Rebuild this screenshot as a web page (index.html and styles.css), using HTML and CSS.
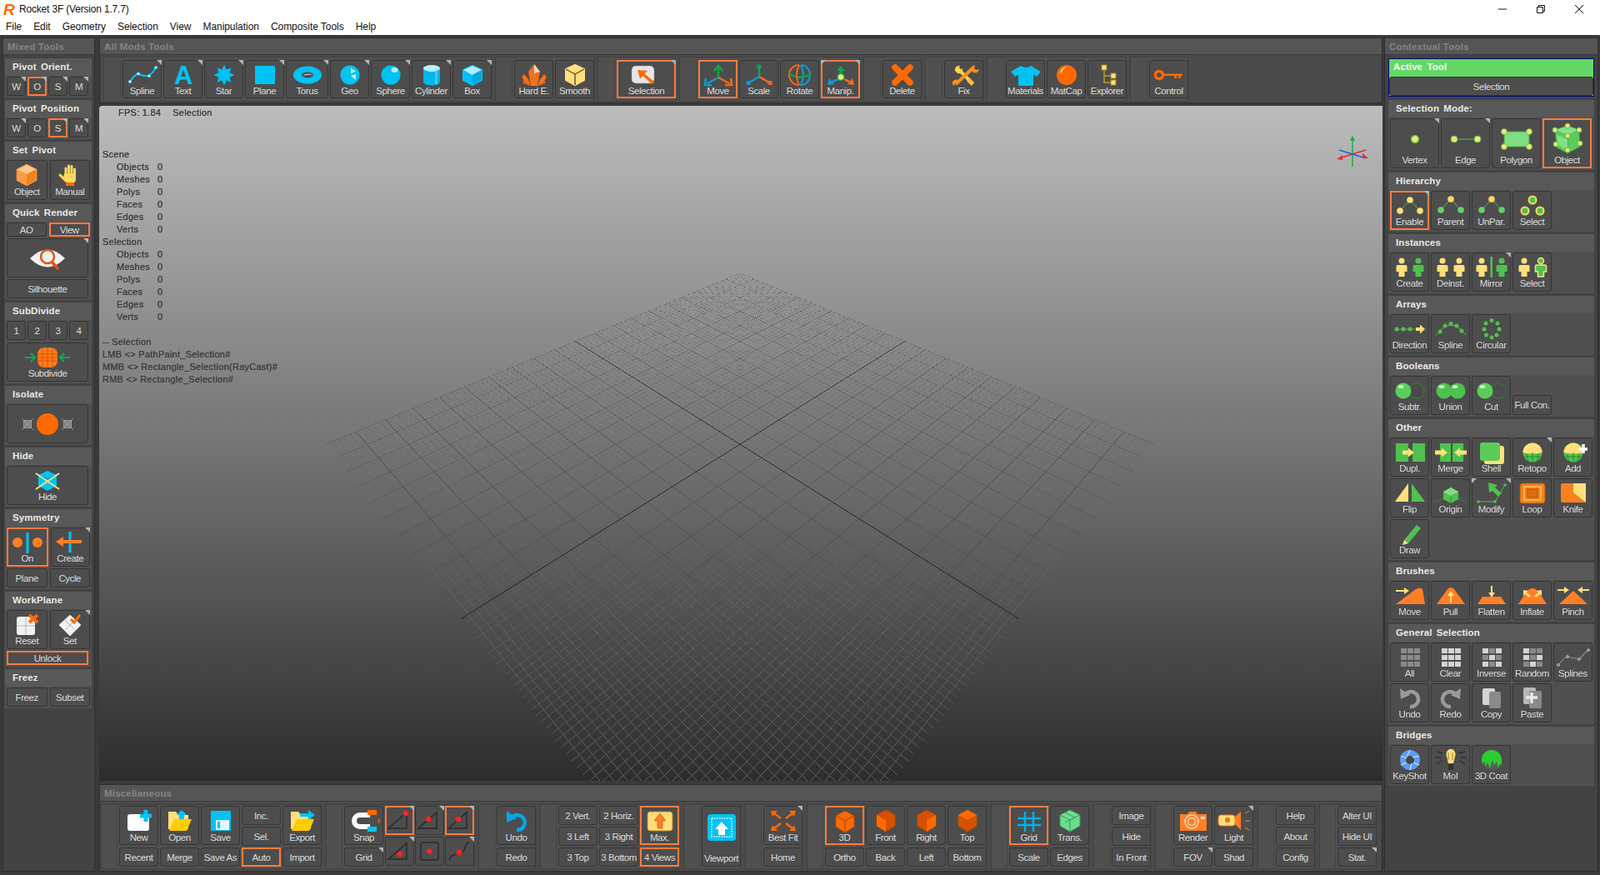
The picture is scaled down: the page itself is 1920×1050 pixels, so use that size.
FILE: index.html
```html
<!DOCTYPE html>
<html lang="en">
<head>
<meta charset="utf-8">
<title>Rocket 3F (Version 1.7.7)</title>
<link rel="stylesheet" href="styles.css">
</head>
<body>
<svg class="defs" aria-hidden="true">
<defs>
<!-- top toolbar -->
<symbol id="spline" viewBox="0 0 40 28"><path d="M5 22Q10 14 15 12.500Q22 16 28 15Q33 11 36 5" fill="none" stroke="#00c3f5" stroke-width="2"/><g fill="#fff" stroke="#00c3f5" stroke-width=".6"><circle cx="5" cy="22" r="1.800"/><circle cx="15" cy="12.500" r="1.800"/><circle cx="28" cy="15" r="1.800"/><circle cx="36" cy="5" r="1.800"/></g></symbol>
<symbol id="text" viewBox="0 0 40 28"><text class="ta" x="20" y="25">A</text></symbol>
<symbol id="star" viewBox="0 0 40 28"><polygon fill="#00c3f5" points="20,1.500 22.700,7.500 28.500,5.500 26.500,11.300 32.500,14 26.500,16.700 28.500,22.500 22.700,20.500 20,26.500 17.300,20.500 11.500,22.500 13.500,16.700 7.500,14 13.500,11.300 11.500,5.500 17.300,7.500"/></symbol>
<symbol id="plane" viewBox="0 0 40 28"><rect x="8" y="3" width="24" height="22" fill="#00c3f5"/></symbol>
<symbol id="torus" viewBox="0 0 40 28"><ellipse cx="20" cy="14" rx="17" ry="10.500" fill="#00c3f5"/><ellipse cx="20" cy="14" rx="7" ry="3.500" fill="#4d4d4d"/><path d="M14 15Q20 11 26 14Q20 12.500 14 15Z" fill="#fff"/></symbol>
<symbol id="geo" viewBox="0 0 40 28"><circle cx="20" cy="14" r="11.500" fill="#00c3f5"/><path d="M21 5.500l6 4-6 3zM21 15l6-2v7z" fill="#cdf3ff"/></symbol>
<symbol id="sphere" viewBox="0 0 40 28"><circle cx="20" cy="14" r="11.500" fill="#00c3f5"/><ellipse cx="24.500" cy="8" rx="4" ry="3" fill="#bdf0ff"/></symbol>
<symbol id="cyl" viewBox="0 0 40 28"><path d="M10 6V22C10 28 30 28 30 22V6Z" fill="#00b5ea"/><ellipse cx="20" cy="6" rx="10" ry="4" fill="#bdf0ff"/><rect x="24" y="6" width="3" height="19" fill="#7fe2ff" opacity=".5"/></symbol>
<symbol id="box" viewBox="0 0 40 28"><path d="M20 3L31 8V20L20 26 9 20V8Z" fill="#00c3f5" stroke="#00c3f5" stroke-linejoin="round" stroke-width="2"/><path d="M9 8L20 3 31 8 20 14Z" fill="#aeeeff"/><path d="M20 14V26L31 20V8Z" fill="#00a8dc"/></symbol>
<symbol id="hard" viewBox="0 0 40 28"><path d="M9 16l7 11-10-3zM31 16l-7 11 10-3z" fill="#e06020"/><path d="M20 1l7 9-3 17H16l-3-17z" fill="#f07020"/><path d="M20 1l7 9-7 2z" fill="#ffd9c0"/><path d="M8 13l5 6 3 8-7-3-4-8zM32 13l-5 6-3 8 7-3 4-8z" fill="#f5701e" stroke="#b84a10" stroke-width=".6"/></symbol>
<symbol id="smooth" viewBox="0 0 40 28"><path d="M20 2L31 7V20L20 26 9 20V7Z" fill="#ffdf7a" stroke="#ffdf7a" stroke-width="2" stroke-linejoin="round"/><path d="M9 7L20 13 31 7M20 13V26" fill="none" stroke="#5a5030" stroke-width="1.400"/></symbol>
<symbol id="sel" viewBox="0 0 40 28"><rect x="2" y="2" width="27" height="21" rx="5" fill="#e6e6e6" stroke="#8a8a8a" stroke-dasharray="2 2"/><path d="M9 7l12 1-3.500 3.500 12 10-2.500 3-11.500-10.500-3.500 3.500z" fill="#ff6a00"/></symbol>
<symbol id="move" viewBox="0 0 40 28"><path d="M20 16V4" stroke="#0ea64c" stroke-width="2.500" fill="none"/><path d="M15 8l5-6 5 6" stroke="#0ea64c" stroke-width="2.500" fill="none"/><path d="M20 16L7 23" stroke="#0e9bd0" stroke-width="2.500"/><path d="M5 17l-1 8 8 0" stroke="#0e9bd0" stroke-width="2.500" fill="none"/><path d="M20 16L33 23" stroke="#f26a1b" stroke-width="2.500"/><path d="M35 17l1 8-8 0" stroke="#f26a1b" stroke-width="2.500" fill="none"/></symbol>
<symbol id="scale" viewBox="0 0 40 28"><path d="M20 16V5" stroke="#0ea64c" stroke-width="2.500"/><circle cx="20" cy="4" r="2.800" fill="#0ea64c"/><path d="M20 16L8 23" stroke="#0e9bd0" stroke-width="2.500"/><circle cx="7" cy="23.500" r="2.800" fill="#0e9bd0"/><path d="M20 16L32 23" stroke="#f26a1b" stroke-width="2.500"/><circle cx="33" cy="23.500" r="2.800" fill="#f26a1b"/></symbol>
<symbol id="rotate" viewBox="0 0 40 28"><path d="M19 2A12 12 0 0 0 19 26" stroke="#f26a1b" stroke-width="2" fill="none"/><path d="M21 2A11 12 0 0 1 21 26Q27 14 21 2" stroke="#0e9bd0" stroke-width="2" fill="none"/><path d="M7 13Q20 20 33 13" stroke="#0ea64c" stroke-width="2.500" fill="none"/><path d="M19 2Q13 14 19 26" stroke="#f26a1b" stroke-width="2" fill="none"/></symbol>
<symbol id="manip" viewBox="0 0 40 28"><path d="M20 14V4" stroke="#0ea64c" stroke-width="3"/><path d="M15 8l5-6 5 6z" fill="#0ea64c"/><path d="M17 18L8 22" stroke="#0e9bd0" stroke-width="2.500"/><path d="M6 17l-2 8 8-1z" fill="#0e9bd0"/><path d="M24 18L32 22" stroke="#f26a1b" stroke-width="2.500"/><path d="M34 17l2 8-8-1z" fill="#f26a1b"/><circle cx="20" cy="15.500" r="4" fill="#e7f27a" stroke="#0ea64c" stroke-width="1.500"/></symbol>
<symbol id="del" viewBox="0 0 40 28"><path d="M11 5L29 23M29 5L11 23" stroke="#ff6a00" stroke-width="7.500" stroke-linecap="round"/></symbol>
<symbol id="fix" viewBox="0 0 40 28"><path d="M12 6L30 24" stroke="#ffd24a" stroke-width="4"/><path d="M9 9a5 5 0 0 1 6-6l-2 3 2 2 3-2a5 5 0 0 1-6 6z" fill="#ffd24a"/><rect x="24" y="20" width="8" height="5" transform="rotate(45 28 22)" fill="#f8bf3a"/><path d="M31 5L10 25" stroke="#f7921e" stroke-width="4"/><path d="M29 9a5 5 0 0 1 4-7l-1 4 2 2 4-1a5 5 0 0 1-7 4z" fill="#f7921e"/><path d="M6 24a4 4 0 0 1 7-3l-6 6z" fill="#f7921e"/></symbol>
<symbol id="shirt" viewBox="0 0 40 28"><path d="M14 3Q20 7 26 3L38 10 33 16 29 13V27H11V13L7 16 2 10Z" fill="#00c3f5"/></symbol>
<symbol id="ball" viewBox="0 0 40 28"><circle cx="20" cy="14" r="12" fill="#ff6a00"/><path d="M12 11Q14 5 20 4Q15 7 13.500 11.500Z" fill="#ffd9bc"/></symbol>
<symbol id="tree" viewBox="0 0 40 28"><path d="M16 8V23H24M16 15H24" fill="none" stroke="#b59b30" stroke-width="1.500"/><g fill="#ffdf7a" stroke="#a08a28"><rect x="13" y="2" width="6" height="6"/><rect x="24" y="12" width="6" height="6"/><rect x="24" y="20" width="6" height="6"/></g></symbol>
<symbol id="key" viewBox="0 0 40 28"><circle cx="8" cy="14" r="4.500" fill="none" stroke="#ff6a00" stroke-width="3.500"/><path d="M13 12.500H36V15H34V18H31V15H29V18H26V15H13Z" fill="#ff6a00"/></symbol>
<!-- left column -->
<symbol id="ocube" viewBox="0 0 40 28"><path d="M20 2L31 7.500V20L20 26 9 20V7.500Z" fill="#ff9b3f" stroke="#ff9b3f" stroke-width="2.500" stroke-linejoin="round"/><path d="M9 7.500L20 2 31 7.500 20 13Z" fill="#ffc98f"/><path d="M20 13V26L31 20V7.500Z" fill="#f08222"/></symbol>
<symbol id="hand" viewBox="0 0 40 28"><path d="M15 21L8 14M15 13V6M18.500 11V3M22 11V3.500M25.500 13V7" stroke="#ffd85c" stroke-width="3" stroke-linecap="round" fill="none"/><path d="M13 12H27V18Q27 22 25 23H16L12 18Z" fill="#ffd85c"/><rect x="15" y="23" width="10" height="4" fill="#ff6a00"/></symbol>
<symbol id="eye" viewBox="0 0 40 28"><path d="M-1 14Q20-7 41 14Q20 35-1 14Z" fill="#f2f2f2"/><circle cx="20" cy="12" r="8" fill="none" stroke="#e4530c" stroke-width="2.500"/><path d="M25 18L33 27" stroke="#e4530c" stroke-width="3.500"/></symbol>
<symbol id="subdiv" viewBox="0 0 58 28"><rect x="17" y="2" width="24" height="24" rx="8" fill="#ff7a1a"/><path d="M17 10H41M17 14H41M17 18H41M23 2V26M29 2V26M35 2V26" stroke="#d24f00" stroke-width=".8"/><path d="M2 14H13M9 9l5 5-5 5M56 14H45M49 9l-5 5 5 5" fill="none" stroke="#12a84e" stroke-width="2.200"/></symbol>
<symbol id="iso" viewBox="0 0 64 28"><g fill="#808080" stroke="#aaa" stroke-width=".8"><path d="M3.500 9.500H12.500V18.500H3.500ZM1 7L15 21M15 7L1 21"/><path d="M51.500 9.500H60.500V18.500H51.500ZM49 7L63 21M63 7L49 21"/></g><circle cx="32" cy="14" r="13" fill="#ff6a00"/></symbol>
<symbol id="hide" viewBox="0 0 40 28"><path d="M20 2L31 7V20L20 26 9 20V7Z" fill="#00c3f5"/><path d="M9 7L20 12 31 7" stroke="#0086b5" fill="none"/><path d="M6 5L34 24M34 5L6 24" stroke="#ffe07a" stroke-width="2"/></symbol>
<symbol id="symon" viewBox="0 0 40 28"><circle cx="8" cy="13" r="6" fill="#ff7f27"/><circle cx="32" cy="13" r="6" fill="#ff7f27"/><rect x="18.500" y="1" width="3" height="25" fill="#00c3f5"/></symbol>
<symbol id="symcr" viewBox="0 0 40 28"><rect x="18.500" y="1" width="3" height="25" fill="#00c3f5"/><path d="M3 13l9-6v4H34v4H12v4z" fill="#ff7f27"/></symbol>
<symbol id="reset" viewBox="0 0 40 28"><rect x="8" y="4" width="22" height="22" rx="3" fill="#f2f2f2"/><path d="M8 15H30M19 4V26" stroke="#a8a8a8" stroke-width=".8"/><path d="M23 2L33 11M33 2L23 11" stroke="#ff6a00" stroke-width="4"/></symbol>
<symbol id="setp" viewBox="0 0 40 28"><path d="M20 3L32 14 20 26 8 14Z" fill="#f2f2f2" stroke="#f2f2f2" stroke-width="2" stroke-linejoin="round"/><path d="M14 8L26 20M26 8L14 20" stroke="#a8a8a8" stroke-width=".8"/><path d="M21 7L25 11 32 2" stroke="#ff6a00" stroke-width="3" fill="none"/></symbol>
<!-- right column -->
<symbol id="vertex" viewBox="0 0 40 28"><circle cx="20" cy="14" r="4.500" fill="#ffe07a" stroke="#4fc14f" stroke-width="1.500"/></symbol>
<symbol id="edge" viewBox="0 0 40 28"><path d="M6 14H34" stroke="#4fc14f"/><circle cx="6" cy="14" r="4" fill="#ffe07a" stroke="#4fc14f"/><circle cx="34" cy="14" r="4" fill="#ffe07a" stroke="#4fc14f"/></symbol>
<symbol id="polyg" viewBox="0 0 40 28"><rect x="5" y="5" width="30" height="18" rx="2" fill="#84dc84" stroke="#3fae3f"/><g fill="#ffe07a" stroke="#4fc14f"><circle cx="5" cy="5" r="3.500"/><circle cx="35" cy="5" r="3.500"/><circle cx="5" cy="23" r="3.500"/><circle cx="35" cy="23" r="3.500"/></g></symbol>
<symbol id="objc" viewBox="0 0 40 28"><path d="M20 -3L34 2 35 22 20 30 7 23 5 2Z" fill="#5bcc5b" stroke="#2f9f2f"/><path d="M5 2L20 8 34 2M20 8V30" fill="none" stroke="#2f9f2f"/><path d="M5 2L20 -3 34 2 20 8Z" fill="#87e087"/><path d="M7 8L20 13V26L9 20Z" fill="#87e087"/><g fill="#ffe07a" stroke="#4fc14f"><circle cx="20" cy="-3" r="3"/><circle cx="5" cy="2" r="3"/><circle cx="34" cy="2" r="3"/><circle cx="20" cy="9" r="3"/><circle cx="6" cy="19" r="3"/><circle cx="35" cy="18" r="3"/><circle cx="20" cy="26" r="3"/></g></symbol>
<symbol id="hier" viewBox="0 0 40 28"><path d="M20 6L8 19M20 6L32 19" stroke="#4fc14f"/><circle cx="20" cy="6" r="3.800" fill="#ffe07a"/><circle cx="8" cy="19" r="3.800" fill="#ffe07a"/><circle cx="32" cy="19" r="3.800" fill="#ffe07a"/></symbol>
<symbol id="hparent" viewBox="0 0 40 28"><path d="M20 6L8 19M20 6L32 19" stroke="#4fc14f"/><circle cx="20" cy="6" r="3.800" fill="#ffd85c"/><circle cx="8" cy="19" r="3.800" fill="#67d067"/><circle cx="32" cy="19" r="3.800" fill="#67d067"/></symbol>
<symbol id="hsel" viewBox="0 0 40 28"><circle cx="20" cy="7" r="4.500" fill="#4fc14f" stroke="#ffd85c" stroke-width="2"/><circle cx="11" cy="20" r="4.500" fill="#4fc14f" stroke="#ffd85c" stroke-width="2"/><circle cx="29" cy="20" r="4.500" fill="#4fc14f" stroke="#ffd85c" stroke-width="2"/></symbol>
<symbol id="person" viewBox="-7 -12 14 24"><circle cy="-8" r="3.500"/><path d="M-5-3H5Q6.500-3 6.500-1V5H3.500V11H-3.500V5H-6.500V-1Q-6.500-3-5-3Z"/></symbol>
<symbol id="ins1" viewBox="0 0 40 28"><use href="#person" x="3" y="2" width="14" height="24" fill="#ffe07a"/><use href="#person" x="23" y="2" width="14" height="24" fill="#4fc14f"/></symbol>
<symbol id="ins2" viewBox="0 0 40 28"><use href="#person" x="3" y="2" width="14" height="24" fill="#ffe07a"/><use href="#person" x="23" y="2" width="14" height="24" fill="#ffe07a"/></symbol>
<symbol id="ins3" viewBox="0 0 40 28"><use href="#person" x="1" y="2" width="14" height="24" fill="#ffe07a"/><rect x="18.500" y="1" width="2.500" height="25" fill="#4fc14f"/><use href="#person" x="25" y="2" width="14" height="24" fill="#4fc14f"/></symbol>
<symbol id="ins4" viewBox="0 0 40 28"><use href="#person" x="3" y="2" width="14" height="24" fill="#ffe07a"/><use href="#person" x="23" y="2" width="14" height="24" fill="#4fc14f" stroke="#ffe07a" stroke-width="1.500"/></symbol>
<symbol id="adir" viewBox="0 0 40 28"><g fill="#4fc14f"><circle cx="4" cy="14" r="2.500"/><circle cx="12" cy="14" r="2.500"/><circle cx="20" cy="14" r="2.500"/></g><path d="M2 14H26" stroke="#4fc14f"/><path d="M27 12H32V8.500L38 14 32 19.500V16H27Z" fill="#ffe07a"/></symbol>
<symbol id="aspl" viewBox="0 0 40 28"><path d="M2 22Q19-3 38 21" fill="none" stroke="#4fc14f"/><g fill="#4fc14f"><circle cx="7" cy="17" r="2.500"/><circle cx="13" cy="10" r="2.500"/><circle cx="20" cy="7.500" r="2.500"/><circle cx="27" cy="10" r="2.500"/><circle cx="33" cy="16" r="2.500"/></g></symbol>
<symbol id="acir" viewBox="0 0 40 28"><g fill="#4fc14f"><circle cx="20" cy="3.500" r="2.500"/><circle cx="27" cy="7" r="2.500"/><circle cx="29" cy="14" r="2.500"/><circle cx="26" cy="21" r="2.500"/><circle cx="20" cy="24" r="2.500"/><circle cx="13.500" cy="21" r="2.500"/><circle cx="11" cy="14" r="2.500"/><circle cx="13" cy="7" r="2.500"/></g></symbol>
<symbol id="bsub" viewBox="0 0 40 28"><circle cx="28" cy="14" r="9" fill="#4a4a4a" stroke="#2b8c2b"/><circle cx="12" cy="14" r="9.500" fill="#5bcc5b"/><ellipse cx="9" cy="9" rx="3.500" ry="2" fill="#c9f2c9"/></symbol>
<symbol id="buni" viewBox="0 0 40 28"><circle cx="12" cy="14" r="9.500" fill="#4fc14f"/><circle cx="28" cy="14" r="9.500" fill="#4fc14f"/><ellipse cx="9" cy="9" rx="3.500" ry="2" fill="#c9f2c9"/><ellipse cx="25" cy="9" rx="3.500" ry="2" fill="#c9f2c9"/></symbol>
<symbol id="bcut" viewBox="0 0 40 28"><circle cx="28" cy="14" r="9" fill="none" stroke="#2b8c2b" stroke-width=".8"/><circle cx="12" cy="14" r="9.500" fill="#5bcc5b"/><ellipse cx="9" cy="9" rx="3.500" ry="2" fill="#c9f2c9"/></symbol>
<symbol id="odup" viewBox="0 0 40 28"><path d="M3 3H18V10L22 14 18 18V25H3Z" fill="#4fc14f"/><rect x="23" y="3" width="15" height="22" fill="#4fc14f"/><path d="M11 11.500H18V8.500L25 14 18 19.500V16.500H11Z" fill="#ffe07a"/></symbol>
<symbol id="omer" viewBox="0 0 40 28"><rect x="7" y="3" width="13" height="22" fill="#4fc14f"/><rect x="22" y="3" width="13" height="22" fill="#4fc14f"/><path d="M1 11.500H9V8.500L16 14 9 19.500V16.500H1ZM39 11.500H31V8.500L24 14 31 19.500V16.500H39Z" fill="#ffe07a"/></symbol>
<symbol id="oshe" viewBox="0 0 40 28"><rect x="11" y="6" width="24" height="22" rx="3" fill="#ffe07a"/><rect x="6" y="2" width="24" height="22" rx="3" fill="#5bcc5b"/></symbol>
<symbol id="oret" viewBox="0 0 40 28"><circle cx="20" cy="14" r="11.500" fill="#4fc14f"/><path d="M8.500 14A11.500 11.500 0 0 1 31.500 14Q20 17 8.500 14Z" fill="#ffe07a"/><path d="M9 19H31M20 14V26M13 16Q13 23 16 25M27 16Q27 23 24 25" stroke="#2b8c2b" fill="none"/></symbol>
<symbol id="oadd" viewBox="0 0 40 28"><use href="#oret"/><path d="M27 10H37M32 4V15" stroke="#fff" stroke-width="3.500"/></symbol>
<symbol id="oflp" viewBox="0 0 40 28"><path d="M18 2V24H2Z" fill="#ffe07a"/><path d="M22 2V24H38Z" fill="#4fc14f"/></symbol>
<symbol id="oori" viewBox="0 0 40 28"><path d="M20 -2V7M11 20L1 25M29 20L39 25" stroke="#2f8f2f" stroke-width=".8"/><path d="M20 7L29 12V21L20 26 11 21V12Z" fill="#4fc14f"/><path d="M11 12L20 7 29 12 20 17Z" fill="#84dc84"/><path d="M20 17V26" stroke="#2f8f2f"/></symbol>
<symbol id="omod" viewBox="0 0 40 28"><path d="M4 24H24L36 4" fill="none" stroke="#4fc14f"/><g fill="#4fc14f"><circle cx="4" cy="24" r="1.800"/><circle cx="24" cy="24" r="1.800"/><circle cx="36" cy="4" r="1.800"/></g><path d="M16 1L27 4 24 7 32 14 28 18 21 11 17 13Z" fill="#4fc14f"/></symbol>
<symbol id="oloo" viewBox="0 0 40 28"><rect x="5" y="2" width="30" height="24" rx="3" fill="#f5821f" stroke="#a85a10"/><rect x="10" y="6" width="20" height="16" fill="#f5821f" stroke="#ffe07a"/><rect x="14" y="9" width="12" height="10" fill="#e06a10" stroke="#a85a10"/></symbol>
<symbol id="okni" viewBox="0 0 40 28"><rect x="5" y="2" width="30" height="23" rx="2" fill="#f5821f"/><path d="M20 2H35V25L20 13Z" fill="#ffe07a"/></symbol>
<symbol id="odra" viewBox="0 0 40 28"><path d="M13 21L28 3 33 7 18 25Z" fill="#4fc14f"/><path d="M13 21L11 27 18 25Z" fill="#ffe07a"/></symbol>
<symbol id="bmov" viewBox="0 0 40 28"><path d="M3 24L27 6Q32 3 35 6L38 24Z" fill="#ff7f27"/><path d="M3 7H13V4L19 8 13 12V9H3Z" fill="#ffe07a"/></symbol>
<symbol id="bpul" viewBox="0 0 40 28"><path d="M3 24L16 6Q20 2 24 6L37 24Z" fill="#ff7f27"/><path d="M20 8L24 14H21V22H19V14H16Z" fill="#ffe07a"/></symbol>
<symbol id="bfla" viewBox="0 0 40 28"><path d="M3 24L9 15H31L37 24Z" fill="#ff7f27"/><path d="M19 2H21V10H24L20 16 16 10H19Z" fill="#ffe07a"/></symbol>
<symbol id="binf" viewBox="0 0 40 28"><path d="M3 24L12 10Q20 0 28 10L37 24Z" fill="#ff7f27"/><path d="M12 5L20 13H24" fill="none"/><path d="M9 7L15 8 13 10 18 14 16 16 11 12 9 14ZM31 7L25 8 27 10 22 14 24 16 29 12 31 14Z" fill="#ffe07a"/></symbol>
<symbol id="bpin" viewBox="0 0 40 28"><path d="M3 24L20 8 37 24Z" fill="#ff7f27"/><path d="M1 6H9V3L15 7 9 11V8H1ZM39 6H31V3L25 7 31 11V8H39Z" fill="#ffe07a"/></symbol>
<symbol id="gall" viewBox="0 0 40 28"><path fill="#8a8a8a" d="M9 3h7v6H9zM17 3h7v6h-7zM25 3h7v6h-7zM9 11h7v6H9zM17 11h7v6h-7zM25 11h7v6h-7zM9 19h7v6H9zM17 19h7v6h-7zM25 19h7v6h-7z"/></symbol>
<symbol id="gclr" viewBox="0 0 40 28"><path fill="#d4d4d4" d="M9 3h7v6H9zM17 3h7v6h-7zM25 3h7v6h-7zM9 11h7v6H9zM17 11h7v6h-7zM25 11h7v6h-7zM9 19h7v6H9zM17 19h7v6h-7zM25 19h7v6h-7z"/></symbol>
<symbol id="ginv" viewBox="0 0 40 28"><path fill="#d4d4d4" d="M9 3h7v6H9zM25 3h7v6h-7zM17 11h7v6h-7zM9 19h7v6H9zM25 19h7v6h-7z"/><path fill="#8a8a8a" d="M17 3h7v6h-7zM9 11h7v6H9zM25 11h7v6h-7zM17 19h7v6h-7z"/></symbol>
<symbol id="grnd" viewBox="0 0 40 28"><path fill="#d4d4d4" d="M9 3h7v6H9zM9 11h7v6H9zM25 11h7v6h-7zM17 19h7v6h-7z"/><path fill="#8a8a8a" d="M17 3h7v6h-7zM25 3h7v6h-7zM17 11h7v6h-7zM9 19h7v6H9zM25 19h7v6h-7z"/></symbol>
<symbol id="gspl" viewBox="0 0 40 28"><path d="M2 23Q8 15 13 13L27 16Q32 10 38 5" fill="none" stroke="#8a8a8a" stroke-width="1.200"/><g fill="#8a8a8a" stroke="#d4d4d4" stroke-width=".5"><circle cx="2" cy="23" r="1.600"/><circle cx="13" cy="13" r="1.600"/><circle cx="27" cy="16" r="1.600"/><circle cx="38" cy="5" r="1.600"/></g></symbol>
<symbol id="gund" viewBox="0 0 40 28"><path d="M13 11A9 9 0 1 1 20 24" fill="none" stroke="#9a9a9a" stroke-width="4.500"/><path d="M8 2L9 15 20 10Z" fill="#9a9a9a"/></symbol>
<symbol id="gred" viewBox="0 0 40 28"><path d="M27 11A9 9 0 1 0 20 24" fill="none" stroke="#9a9a9a" stroke-width="4.500"/><path d="M32 2L31 15 20 10Z" fill="#9a9a9a"/></symbol>
<symbol id="gcop" viewBox="0 0 40 28"><rect x="9" y="2" width="15" height="20" rx="2" fill="#d4d4d4"/><rect x="17" y="6" width="14" height="20" rx="2" fill="#8a8a8a"/></symbol>
<symbol id="gpas" viewBox="0 0 40 28"><rect x="9" y="1" width="15" height="20" rx="2" fill="#b8b8b8"/><rect x="16" y="5" width="15" height="21" rx="2" fill="#8a8a8a"/><path d="M12 13H26M19 7V20" stroke="#e8e8e8" stroke-width="3.500"/></symbol>
<symbol id="keysh" viewBox="0 0 40 28"><circle cx="20" cy="14" r="12" fill="#5b9cf5"/><circle cx="20" cy="14" r="5" fill="#444"/><path d="M20 2L16 10M31 9L23 11M31 20L24 17M20 26L22 18M9 20L16 17M9 9L16 12" stroke="#cfe2ff" stroke-width="1.200"/></symbol>
<symbol id="moi" viewBox="0 0 40 28"><path d="M15 10A5.500 6.500 0 1 1 25 10Q24 14 23 18H17Q16 14 15 10Z" fill="#ffe07a"/><rect x="17" y="19" width="6" height="7" fill="#333"/><path d="M17 5V14M22 5V14" stroke="#8a6a10" stroke-width=".8"/><path d="M3 4L10 6M1 11H8M3 19L9 15M37 4L30 6M39 11H32M37 19L31 15" stroke="#222" fill="none"/></symbol>
<symbol id="coat" viewBox="0 0 40 28"><circle cx="20" cy="14" r="12" fill="#5a5a5a"/><path d="M8 14A12 12 0 0 1 32 14V21L30 18 28 24 26 16 23 20 21 14 18 24 15 17 13 22 11 15 9 20Z" fill="#2ecc2e"/></symbol>
<!-- bottom toolbar -->
<symbol id="new" viewBox="0 0 40 28"><rect x="6" y="6" width="26" height="20" rx="3" fill="#fff"/><path d="M28 1V15M21 8H35" stroke="#00c3f5" stroke-width="5"/></symbol>
<symbol id="open" viewBox="0 0 40 28"><path d="M6 3H15L18 7H30V24H6Z" fill="#ffe07a"/><path d="M7 26L13 12H34L28 26Z" fill="#ffcc00"/><path d="M20 3L26 9H23V14H17V9H14Z" fill="#00c3f5" transform="translate(2 -2)"/></symbol>
<symbol id="save" viewBox="0 0 40 28"><rect x="8" y="2" width="24" height="24" fill="#00c3f5"/><rect x="14" y="13" width="16" height="12" fill="#e0f7ff"/><rect x="16" y="15" width="3" height="8" fill="#00c3f5"/></symbol>
<symbol id="export" viewBox="0 0 40 28"><path d="M6 3H15L18 7H30V24H6Z" fill="#ffe07a"/><path d="M7 26L13 12H34L28 26Z" fill="#ffcc00"/><path d="M16 7H26V3L34 9 26 15V11H16Z" fill="#00c3f5" transform="translate(1 -2)"/></symbol>
<symbol id="snap" viewBox="0 0 40 28"><path d="M27 7H15A7 7 0 0 0 15 21H27" fill="none" stroke="#fff" stroke-width="6"/><rect x="24" y="1" width="11" height="6" fill="#ff6a00"/><rect x="24" y="21" width="11" height="6" fill="#00c3f5"/><path d="M37 11L39 14 37 14 38 17" stroke="#ff6a00" fill="none"/></symbol>
<symbol id="t1" viewBox="0 0 35 35"><path d="M4 27L26 8V27Z" fill="none" stroke="#2a2a2a" stroke-width="1.500"/><circle cx="25" cy="9" r="3.300" fill="#f22"/></symbol>
<symbol id="t2" viewBox="0 0 35 35"><path d="M4 27L26 8V27Z" fill="none" stroke="#2a2a2a" stroke-width="1.500"/><circle cx="16" cy="16" r="3.300" fill="#f22"/></symbol>
<symbol id="t4" viewBox="0 0 35 35"><path d="M4 27L26 8V27Z" fill="none" stroke="#2a2a2a" stroke-width="1.500"/><circle cx="18" cy="21" r="3.300" fill="#f22"/></symbol>
<symbol id="t5" viewBox="0 0 35 35"><rect x="7" y="7" width="21" height="21" rx="2" fill="none" stroke="#2a2a2a" stroke-width="1.500"/><circle cx="17.500" cy="17.500" r="3.300" fill="#f22"/></symbol>
<symbol id="t6" viewBox="0 0 35 35"><path d="M5 28Q7 22 14 21Q24 19 24 13Q25 8 29 7" fill="none" stroke="#2a2a2a" stroke-width="1.500"/><circle cx="17" cy="19" r="3.300" fill="#f22"/></symbol>
<symbol id="undo" viewBox="0 0 40 28"><path d="M14 10A9 9 0 1 1 20 25" fill="none" stroke="#00a8e6" stroke-width="4.500"/><path d="M8 2L8 16 20 11Z" fill="#00a8e6"/></symbol>
<symbol id="max" viewBox="0 0 40 28"><rect x="5" y="2" width="30" height="23" rx="3" fill="#ffdf7a" stroke="#c87a20"/><path d="M20 4L27 13H23V22H17V13H13Z" fill="#ff7f27" stroke="#b8500c" stroke-width=".6"/></symbol>
<symbol id="vport" viewBox="0 0 40 34"><rect x="3" y="1" width="34" height="32" rx="4" fill="#00c3f5"/><rect x="8" y="6" width="24" height="22" fill="none" stroke="#fff" stroke-width="1.500" stroke-dasharray="1.500 1.500"/><path d="M20 10L28 19H24V26H16V19H12Z" fill="#fff"/></symbol>
<symbol id="fit" viewBox="0 0 40 28"><g stroke="#ff6a00" stroke-width="2.500"><path d="M9 5L17 11M31 5L23 11M9 23L17 17M31 23L23 17"/></g><path d="M5 2H13L7 9ZM35 2H27L33 9ZM5 26H13L7 19ZM35 26H27L33 19Z" fill="#ff6a00"/></symbol>
<symbol id="c3d" viewBox="0 0 40 28"><path d="M20 1L31 7V20L20 27 9 20V7Z" fill="#ff6a00" stroke="#b84a00" stroke-linejoin="round"/><path d="M9 7L20 13 31 7M20 13V27" fill="none" stroke="#b84a00" stroke-width="1.200"/></symbol>
<symbol id="cfr" viewBox="0 0 40 28"><path d="M20 1L31 7V20L20 27 9 20V7Z" fill="#d55000" stroke="#b84a00" stroke-linejoin="round"/><path d="M9 7L20 13V27L9 20Z" fill="#ff6a00"/></symbol>
<symbol id="cri" viewBox="0 0 40 28"><path d="M20 1L31 7V20L20 27 9 20V7Z" fill="#d55000" stroke="#b84a00" stroke-linejoin="round"/><path d="M31 7L20 13V27L31 20Z" fill="#ff6a00"/></symbol>
<symbol id="cto" viewBox="0 0 40 28"><path d="M20 1L31 7V20L20 27 9 20V7Z" fill="#d55000" stroke="#b84a00" stroke-linejoin="round"/><path d="M9 7L20 1 31 7 20 13Z" fill="#ff6a00"/></symbol>
<symbol id="grid" viewBox="0 0 40 28"><path d="M15 2V26M25 2V26M6 10H34M6 18H34" stroke="#00b0e8" stroke-width="2.500" fill="none"/></symbol>
<symbol id="trans" viewBox="0 0 40 28"><path d="M20 1L32 7V20L20 27 8 20V7Z" fill="#6fdc8c" stroke="#2f9f5f"/><path d="M8 7L20 13 32 7M20 13V27M14 4L26 10M14 16L26 10" fill="none" stroke="#2f9f5f"/></symbol>
<symbol id="cam" viewBox="0 0 40 28"><path d="M4 6H13L15 3H23L25 6H36V26H4Z" fill="#ff7f27"/><circle cx="18" cy="15" r="8" fill="none" stroke="#ffe0c0" stroke-width="1.500"/><circle cx="18" cy="15" r="4.500" fill="none" stroke="#ffe0c0" stroke-width="1.500"/><rect x="29" y="9" width="5" height="3" fill="#ffe0c0"/></symbol>
<symbol id="torch" viewBox="0 0 40 28"><rect x="1" y="7" width="20" height="13" rx="3" fill="#ffe07a" stroke="#e8761a"/><rect x="9" y="10" width="6" height="6" rx="2" fill="#e8761a"/><path d="M21 9L28 3V25L21 18Z" fill="#ff7f27"/><path d="M33 5L38 2M33 14H39M33 22L38 25" stroke="#ff7f27" fill="none"/></symbol>
</defs>
</svg>

<header class="titlebar">
  <svg class="logo" viewBox="0 0 14 18"><text class="logo-r" x="0" y="16">R</text></svg>
  <span class="wintitle">Rocket 3F (Version 1.7.7)</span>
  <span class="winctl">
    <svg class="wbtn" viewBox="0 0 12 12"><path d="M1 6H11" stroke="#111" fill="none"/></svg>
    <svg class="wbtn" viewBox="0 0 12 12"><path d="M1.500 3.500H8.500V10.500H1.500ZM3.500 3.500V1.500H10.500V8.500H8.500" stroke="#111" fill="none"/></svg>
    <svg class="wbtn" viewBox="0 0 12 12"><path d="M1 1L11 11M11 1L1 11" stroke="#111" fill="none"/></svg>
  </span>
</header>
<nav class="menubar"><span>File</span><span>Edit</span><span>Geometry</span><span>Selection</span><span>View</span><span>Manipulation</span><span>Composite Tools</span><span>Help</span></nav>

<main class="main">
  <aside class="panel left">
    <h2 class="ptitle">Mixed Tools</h2>
    <section class="grp"><h3 class="gh">Pivot Orient.</h3><div class="row"><button class="b s mk">W</button><button class="b s mk on">O</button><button class="b s mk">S</button><button class="b s mk">M</button></div></section>
    <section class="grp"><h3 class="gh">Pivot Position</h3><div class="row"><button class="b s mk">W</button><button class="b s">O</button><button class="b s mk on">S</button><button class="b s mk">M</button></div></section>
    <section class="grp"><h3 class="gh">Set Pivot</h3><div class="row r3 tall"><button class="b t"><svg class="i"><use href="#ocube"/></svg><span>Object</span></button><button class="b t"><svg class="i"><use href="#hand"/></svg><span>Manual</span></button></div></section>
    <section class="grp"><h3 class="gh">Quick Render</h3><div class="row r3"><button class="b x">AO</button><button class="b x on">View</button></div><button class="b big mk v2"><svg class="i"><use href="#eye"/></svg></button><button class="b wide v2">Silhouette</button></section>
    <section class="grp"><h3 class="gh">SubDivide</h3><div class="row"><button class="b s">1</button><button class="b s">2</button><button class="b s">3</button><button class="b s">4</button></div><button class="b t big v3"><svg class="i i58"><use href="#subdiv"/></svg><span>Subdivide</span></button></section>
    <section class="grp"><h3 class="gh">Isolate</h3><button class="b big"><svg class="i i64"><use href="#iso"/></svg></button></section>
    <section class="grp"><h3 class="gh">Hide</h3><button class="b t big"><svg class="i"><use href="#hide"/></svg><span>Hide</span></button></section>
    <section class="grp"><h3 class="gh">Symmetry</h3><div class="row r3"><button class="b t on"><svg class="i"><use href="#symon"/></svg><span>On</span></button><button class="b t mk"><svg class="i"><use href="#symcr"/></svg><span>Create</span></button></div><div class="row r3 v2"><button class="b s">Plane</button><button class="b s">Cycle</button></div></section>
    <section class="grp"><h3 class="gh">WorkPlane</h3><div class="row r3"><button class="b t"><svg class="i"><use href="#reset"/></svg><span>Reset</span></button><button class="b t mk"><svg class="i"><use href="#setp"/></svg><span>Set</span></button></div><button class="b x wide v2 on">Unlock</button></section>
    <section class="grp"><h3 class="gh">Freez</h3><div class="row r3"><button class="b s">Freez</button><button class="b s">Subset</button></div></section>
  </aside>

  <div class="center">
    <section class="panel top">
      <h2 class="ptitle">All Mods Tools</h2>
      <div class="toolbar">
        <div class="tg"><i class="h"></i><button class="b t mk"><svg class="i"><use href="#spline"/></svg><span>Spline</span></button><button class="b t mk"><svg class="i"><use href="#text"/></svg><span>Text</span></button><button class="b t mk"><svg class="i"><use href="#star"/></svg><span>Star</span></button><button class="b t mk"><svg class="i"><use href="#plane"/></svg><span>Plane</span></button><button class="b t mk w51"><svg class="i"><use href="#torus"/></svg><span>Torus</span></button><button class="b t mk"><svg class="i"><use href="#geo"/></svg><span>Geo</span></button><button class="b t mk"><svg class="i"><use href="#sphere"/></svg><span>Sphere</span></button><button class="b t mk"><svg class="i"><use href="#cyl"/></svg><span>Cylinder</span></button><button class="b t mk"><svg class="i"><use href="#box"/></svg><span>Box</span></button></div>
        <div class="tg"><i class="h"></i><button class="b t"><svg class="i"><use href="#hard"/></svg><span>Hard E.</span></button><button class="b t"><svg class="i"><use href="#smooth"/></svg><span>Smooth</span></button></div>
        <div class="tg"><i class="h"></i><button class="b t mk on w71"><svg class="i"><use href="#sel"/></svg><span>Selection</span></button></div>
        <div class="tg"><i class="h"></i><button class="b t on"><svg class="i"><use href="#move"/></svg><span>Move</span></button><button class="b t"><svg class="i"><use href="#scale"/></svg><span>Scale</span></button><button class="b t"><svg class="i"><use href="#rotate"/></svg><span>Rotate</span></button><button class="b t mk tl on"><svg class="i"><use href="#manip"/></svg><span>Manip.</span></button></div>
        <div class="tg"><i class="h"></i><button class="b t"><svg class="i"><use href="#del"/></svg><span>Delete</span></button></div>
        <div class="tg"><i class="h"></i><button class="b t"><svg class="i"><use href="#fix"/></svg><span>Fix</span></button></div>
        <div class="tg"><i class="h"></i><button class="b t"><svg class="i"><use href="#shirt"/></svg><span>Materials</span></button><button class="b t"><svg class="i"><use href="#ball"/></svg><span>MatCap</span></button><button class="b t"><svg class="i"><use href="#tree"/></svg><span>Explorer</span></button></div>
        <div class="tg"><i class="h"></i><button class="b t"><svg class="i"><use href="#key"/></svg><span>Control</span></button></div>
      </div>
    </section>

    <section class="viewport">
      <div class="plane"></div>
      <svg class="gizmo" viewBox="0 0 40 44"><path d="M20 2V38" stroke="#18b04a" stroke-width="1.500"/><path d="M17 7L20 1 23 7Z" fill="#18b04a"/><path d="M4 28L36 18" stroke="#e8283c" stroke-width="1.500"/><path d="M4 18L36 28" stroke="#2060e0" stroke-width="1.500"/><path d="M1 29L8 24 8 30ZM39 28L32 22 32 28Z" fill="#e8283c"/></svg>
      <div class="stats">
        <p class="fps"><span>FPS: 1.84</span><span>Selection</span></p>
        <p>Scene</p>
        <dl><dt>Objects</dt><dd>0</dd><dt>Meshes</dt><dd>0</dd><dt>Polys</dt><dd>0</dd><dt>Faces</dt><dd>0</dd><dt>Edges</dt><dd>0</dd><dt>Verts</dt><dd>0</dd></dl>
        <p>Selection</p>
        <dl><dt>Objects</dt><dd>0</dd><dt>Meshes</dt><dd>0</dd><dt>Polys</dt><dd>0</dd><dt>Faces</dt><dd>0</dd><dt>Edges</dt><dd>0</dd><dt>Verts</dt><dd>0</dd></dl>
        <p class="gap">-- Selection</p>
        <p>LMB &lt;&gt; PathPaint_Selection#</p>
        <p>MMB &lt;&gt; Rectangle_Selection(RayCast)#</p>
        <p>RMB &lt;&gt; Rectangle_Selection#</p>
      </div>
    </section>

    <section class="panel misc">
      <h2 class="ptitle">Miscellaneous</h2>
      <div class="toolbar tb2">
        <div class="tg"><i class="h"></i>
          <div class="col"><button class="b t"><svg class="i"><use href="#new"/></svg><span>New</span></button><button class="b s">Recent</button></div>
          <div class="col"><button class="b t"><svg class="i"><use href="#open"/></svg><span>Open</span></button><button class="b s">Merge</button></div>
          <div class="col"><button class="b t"><svg class="i"><use href="#save"/></svg><span>Save</span></button><button class="b s">Save As</button></div>
          <div class="col c3"><button class="b s">Inc.</button><button class="b s">Sel.</button><button class="b s on">Auto</button></div>
          <div class="col"><button class="b t"><svg class="i"><use href="#export"/></svg><span>Export</span></button><button class="b s">Import</button></div>
        </div>
        <div class="tg"><i class="h"></i>
          <div class="col"><button class="b t"><svg class="i"><use href="#snap"/></svg><span>Snap</span></button><button class="b s mk">Grid</button></div>
          <div class="tris"><button class="b tb mk on"><svg class="i35"><use href="#t1"/></svg></button><button class="b tb mk"><svg class="i35"><use href="#t2"/></svg></button><button class="b tb mk on"><svg class="i35"><use href="#t2"/></svg></button><button class="b tb mk"><svg class="i35"><use href="#t4"/></svg></button><button class="b tb"><svg class="i35"><use href="#t5"/></svg></button><button class="b tb mk"><svg class="i35"><use href="#t6"/></svg></button></div>
        </div>
        <div class="tg"><i class="h"></i><div class="col"><button class="b t"><svg class="i"><use href="#undo"/></svg><span>Undo</span></button><button class="b s">Redo</button></div></div>
        <div class="tg"><i class="h"></i>
          <div class="col c3"><button class="b s">2 Vert.</button><button class="b s">3 Left</button><button class="b s">3 Top</button></div>
          <div class="col c3"><button class="b s">2 Horiz.</button><button class="b s">3 Right</button><button class="b s">3 Bottom</button></div>
          <div class="col"><button class="b t on"><svg class="i"><use href="#max"/></svg><span>Max.</span></button><button class="b s on">4 Views</button></div>
        </div>
        <div class="tg"><i class="h"></i><button class="b t vp"><svg class="i i34"><use href="#vport"/></svg><span>Viewport</span></button></div>
        <div class="tg"><i class="h"></i><div class="col"><button class="b t mk"><svg class="i"><use href="#fit"/></svg><span>Best Fit</span></button><button class="b s">Home</button></div></div>
        <div class="tg"><i class="h"></i>
          <div class="col"><button class="b t on"><svg class="i"><use href="#c3d"/></svg><span>3D</span></button><button class="b s">Ortho</button></div>
          <div class="col"><button class="b t"><svg class="i"><use href="#cfr"/></svg><span>Front</span></button><button class="b s">Back</button></div>
          <div class="col"><button class="b t"><svg class="i"><use href="#cri"/></svg><span>Right</span></button><button class="b s">Left</button></div>
          <div class="col"><button class="b t"><svg class="i"><use href="#cto"/></svg><span>Top</span></button><button class="b s">Bottom</button></div>
        </div>
        <div class="tg"><i class="h"></i>
          <div class="col"><button class="b t on"><svg class="i"><use href="#grid"/></svg><span>Grid</span></button><button class="b s">Scale</button></div>
          <div class="col"><button class="b t"><svg class="i"><use href="#trans"/></svg><span>Trans.</span></button><button class="b s">Edges</button></div>
        </div>
        <div class="tg"><i class="h"></i><div class="col c3"><button class="b s">Image</button><button class="b s">Hide</button><button class="b s">In Front</button></div></div>
        <div class="tg"><i class="h"></i>
          <div class="col"><button class="b t"><svg class="i"><use href="#cam"/></svg><span>Render</span></button><button class="b s mk">FOV</button></div>
          <div class="col"><button class="b t mk"><svg class="i"><use href="#torch"/></svg><span>Light</span></button><button class="b s">Shad</button></div>
        </div>
        <div class="tg"><i class="h"></i><div class="col c3"><button class="b s">Help</button><button class="b s">About</button><button class="b s">Config</button></div></div>
        <div class="tg"><i class="h"></i><div class="col c3"><button class="b s">Alter UI</button><button class="b s">Hide UI</button><button class="b s mk">Stat.</button></div></div>
      </div>
    </section>
  </div>

  <aside class="panel right">
    <h2 class="ptitle">Contextual Tools</h2>
    <section class="active"><h3 class="gh ga">Active Tool</h3><button class="b s actbtn">Selection</button></section>
    <section class="grp"><h3 class="gh">Selection Mode:</h3><div class="row"><button class="b t m mk"><svg class="i"><use href="#vertex"/></svg><span>Vertex</span></button><button class="b t m mk"><svg class="i"><use href="#edge"/></svg><span>Edge</span></button><button class="b t m"><svg class="i"><use href="#polyg"/></svg><span>Polygon</span></button><button class="b t m on"><svg class="i"><use href="#objc"/></svg><span>Object</span></button></div></section>
    <section class="grp"><h3 class="gh">Hierarchy</h3><div class="row"><button class="b t mk on"><svg class="i"><use href="#hier"/></svg><span>Enable</span></button><button class="b t"><svg class="i"><use href="#hparent"/></svg><span>Parent</span></button><button class="b t"><svg class="i"><use href="#hparent"/></svg><span>UnPar.</span></button><button class="b t"><svg class="i"><use href="#hsel"/></svg><span>Select</span></button></div></section>
    <section class="grp"><h3 class="gh">Instances</h3><div class="row"><button class="b t"><svg class="i"><use href="#ins1"/></svg><span>Create</span></button><button class="b t"><svg class="i"><use href="#ins2"/></svg><span>Deinst.</span></button><button class="b t mk"><svg class="i"><use href="#ins3"/></svg><span>Mirror</span></button><button class="b t"><svg class="i"><use href="#ins4"/></svg><span>Select</span></button></div></section>
    <section class="grp"><h3 class="gh">Arrays</h3><div class="row"><button class="b t"><svg class="i"><use href="#adir"/></svg><span>Direction</span></button><button class="b t"><svg class="i"><use href="#aspl"/></svg><span>Spline</span></button><button class="b t"><svg class="i"><use href="#acir"/></svg><span>Circular</span></button></div></section>
    <section class="grp"><h3 class="gh">Booleans</h3><div class="row"><button class="b t"><svg class="i"><use href="#bsub"/></svg><span>Subtr.</span></button><button class="b t"><svg class="i"><use href="#buni"/></svg><span>Union</span></button><button class="b t"><svg class="i"><use href="#bcut"/></svg><span>Cut</span></button><button class="b s low">Full Con.</button></div></section>
    <section class="grp"><h3 class="gh">Other</h3><div class="row"><button class="b t"><svg class="i"><use href="#odup"/></svg><span>Dupl.</span></button><button class="b t"><svg class="i"><use href="#omer"/></svg><span>Merge</span></button><button class="b t"><svg class="i"><use href="#oshe"/></svg><span>Shell</span></button><button class="b t mk"><svg class="i"><use href="#oret"/></svg><span>Retopo</span></button><button class="b t"><svg class="i"><use href="#oadd"/></svg><span>Add</span></button></div>
      <div class="row v2"><button class="b t"><svg class="i"><use href="#oflp"/></svg><span>Flip</span></button><button class="b t"><svg class="i"><use href="#oori"/></svg><span>Origin</span></button><button class="b t mk tl"><svg class="i"><use href="#omod"/></svg><span>Modify</span></button><button class="b t"><svg class="i"><use href="#oloo"/></svg><span>Loop</span></button><button class="b t"><svg class="i"><use href="#okni"/></svg><span>Knife</span></button></div>
      <div class="row v2"><button class="b t"><svg class="i"><use href="#odra"/></svg><span>Draw</span></button></div></section>
    <section class="grp"><h3 class="gh">Brushes</h3><div class="row"><button class="b t"><svg class="i"><use href="#bmov"/></svg><span>Move</span></button><button class="b t"><svg class="i"><use href="#bpul"/></svg><span>Pull</span></button><button class="b t"><svg class="i"><use href="#bfla"/></svg><span>Flatten</span></button><button class="b t"><svg class="i"><use href="#binf"/></svg><span>Inflate</span></button><button class="b t"><svg class="i"><use href="#bpin"/></svg><span>Pinch</span></button></div></section>
    <section class="grp"><h3 class="gh">General Selection</h3><div class="row"><button class="b t"><svg class="i"><use href="#gall"/></svg><span>All</span></button><button class="b t"><svg class="i"><use href="#gclr"/></svg><span>Clear</span></button><button class="b t"><svg class="i"><use href="#ginv"/></svg><span>Inverse</span></button><button class="b t"><svg class="i"><use href="#grnd"/></svg><span>Random</span></button><button class="b t"><svg class="i"><use href="#gspl"/></svg><span>Splines</span></button></div>
      <div class="row v2"><button class="b t"><svg class="i"><use href="#gund"/></svg><span>Undo</span></button><button class="b t"><svg class="i"><use href="#gred"/></svg><span>Redo</span></button><button class="b t"><svg class="i"><use href="#gcop"/></svg><span>Copy</span></button><button class="b t"><svg class="i"><use href="#gpas"/></svg><span>Paste</span></button></div></section>
    <section class="grp"><h3 class="gh">Bridges</h3><div class="row"><button class="b t"><svg class="i"><use href="#keysh"/></svg><span>KeyShot</span></button><button class="b t"><svg class="i"><use href="#moi"/></svg><span>MoI</span></button><button class="b t"><svg class="i"><use href="#coat"/></svg><span>3D Coat</span></button></div></section>
  </aside>
</main>
</body>
</html>
```
FILE: styles.css
```css
* { box-sizing: border-box; }
html, body { margin: 0; height: 100%; }
body {
  width: 1920px; height: 1050px; overflow: hidden; background: #fff;
  display: flex; flex-direction: column;
  font: 12px "Liberation Sans", Arial, sans-serif; color: #000;
}
symbol { overflow: visible; }
.defs { position: absolute; width: 0; height: 0; }
.ta { font: bold 31px "Liberation Sans", Arial, sans-serif; fill: #00c3f5; text-anchor: middle; }

/* window chrome */
.titlebar { height: 22px; display: flex; align-items: center; padding-left: 4px; }
.logo { width: 14px; height: 18px; margin-right: 5px; overflow: visible; }
.logo-r { font: italic bold 19px "Liberation Sans", sans-serif; fill: #ff6a00; }
.wintitle { font-size: 12px; color: #111; letter-spacing: -.18px; }
.winctl { margin-left: auto; display: flex; gap: 34px; padding-right: 19px; }
.wbtn { width: 12px; height: 12px; }
.menubar { height: 20px; display: flex; align-items: center; gap: 14px; padding-left: 7px; font-size: 12px; color: #111; letter-spacing: -.05px; }

/* layout */
.main {
  height: 1008px; background: #3a3a3a; padding: 3px 2px 4px 3px;
  display: grid; grid-template-columns: 111px 1543px 257px; column-gap: 2px;
}
.panel { background: #434343; border: 1px solid #2f2f2f; }
.ptitle {
  margin: 0; height: 20px; line-height: 20px; padding-left: 5px; background: #555;
  border-bottom: 1px solid #3c3c3c;
  font-size: 11.5px; font-weight: bold; color: #848484; letter-spacing: .2px;
}
.left { display: flex; flex-direction: column; width: 111px; }
.left .ptitle { margin-bottom: 4px; }
.center { display: flex; flex-direction: column; padding-left: 3px; }
.right { display: flex; flex-direction: column; }
.right .ptitle { margin-bottom: 4px; }

/* tool groups */
.grp {
  width: 104px; margin: 0 0 3px 2px; padding: 0 2px 2px; background: #505050;
  display: flex; flex-direction: column;
}
.right .grp { width: 247px; margin-left: 4px; }
.gh {
  margin: 0 -2px 1px; height: 21px; line-height: 21px; padding-left: 9px; background: #585858;
  font-size: 11.5px; font-weight: bold; color: #e8e8e8; word-spacing: 2px; letter-spacing: .1px;
}
.row { display: flex; gap: 2px; }
.r3 { gap: 3px; }
.r3 > .b { flex: 1; width: auto; }

/* buttons */
.b {
  position: relative; width: 47px; padding: 0; margin: 0; flex: none;
  display: flex; flex-direction: column; align-items: center; justify-content: center;
  background: #4d4d4d; border: 1px solid #363636; border-radius: 3px;
  font: 11.5px "Liberation Sans", Arial, sans-serif; letter-spacing: -.42px; color: #dcdcdc; white-space: nowrap;
}
.v2 { margin-top: 2px; }
.v3 { margin-top: 3px; }
.s { height: 23px; }
.grp .s { width: 23px; }
.r3 > .s { width: auto; }
.x { height: 17px; }
.t { height: 47px; justify-content: flex-start; }
.t span { margin-top: auto; margin-bottom: 2px; line-height: 14px; }
.t.on span { margin-bottom: 1px; }
.tall > .t { height: 48px; }
.i { width: 40px; height: 28px; margin: 3px 0 -8px; overflow: visible; flex: none; }
.i58 { width: 58px; }
.i64 { width: 64px; }
.i34 { height: 34px; margin-top: 8px; }
.i35 { width: 35px; height: 35px; overflow: visible; display: block; }
.big { width: 98px; height: 47px; }
.big .i { margin: 0; }
.big.t .i { margin: 3px 0 -8px; }
.wide { width: 98px; }
.wide:not(.x) { height: 23px; }
.on { border: 2px solid #ff7b3e; border-radius: 0; }
.mk::after {
  content: ""; position: absolute; top: -1px; right: -1px; width: 0; height: 0;
  border-top: 6px solid #b4b4b4; border-left: 6px solid transparent;
}
.on.mk::after { top: -2px; right: -2px; }
.tl::before {
  content: ""; position: absolute; top: -1px; left: -1px; width: 0; height: 0;
  border-top: 6px solid #b4b4b4; border-right: 6px solid transparent;
}
.on.tl::before { top: -2px; left: -2px; }
.w51 { width: 51px; }
.w71 { width: 71px; }

/* selection mode & active tool */
.m { width: 59px; height: 60px; }
.m .i { margin-top: 10px; }
.t.m span { margin-bottom: 2px; }
.t.m.on span { margin-bottom: 1px; }
.active {
  width: 247px; height: 46px; margin: 0 0 4px 4px; background: #64d866; border: 1px solid #000a80;
  display: flex; flex-direction: column;
}
.ga { margin: 0; background: transparent; color: #f4fff4; height: 21px; line-height: 18px; padding-left: 5px; }
.grp .low { width: 47px; align-self: flex-end; height: 24px; }
.actbtn { width: 100%; height: 23px; }

/* toolbars */
.top, .misc { background: #4a4a4a; }
.top { height: 79px; }
.top .ptitle { margin-bottom: 2px; }
.toolbar { display: flex; gap: 4px; padding-left: 4px; height: 54px; }
.tg {
  display: flex; gap: 2px; padding: 4px 0 3px; background: #505050; box-shadow: inset 0 0 0 1px #414141;
  height: 54px; align-items: flex-start;
}
.h { display: block; width: 21px; height: 46px; border-right: 1px solid #454545; }
.tg .t { height: 46px; }
.tg .t span { margin-bottom: 1px; }
.tg .t.on span { margin-bottom: 0; }
.misc { height: 105px; margin-top: 4px; }
.misc .ptitle { margin-bottom: 3px; }
.tb2 { gap: 5px; height: 78px; padding-left: 1px; }
.tb2 .tg { height: 78px; padding: 2px 0; }
.tb2 .h { width: 20px; height: 73px; }
.col { display: flex; flex-direction: column; gap: 3px; }
.c3 { gap: 2px; }
.tris { display: grid; grid-template-columns: 35px 35px 35px; gap: 2px 1px; }
.tb { width: 35px; height: 35px; }
.tb2 .t { height: 47px; }
.tb2 .vp { height: 73px; }
.tb2 .vp span { margin-bottom: 2px; }

/* viewport */
.viewport {
  position: relative; overflow: hidden; height: 810px; margin-top: 3px; border-radius: 4px 0 0 0;
  background: linear-gradient(#bcbcbc, #2d2d2d);
  color: #3e3e3e; font-size: 11px; letter-spacing: .25px;
}
.plane {
  position: absolute; left: 0; top: 0; width: 2000px; height: 2000px; transform-origin: 0 0;
  transform: matrix3d(.03307,.03341,0,-.00017017, -.29478,.03341,0,-.00017017, 0,0,1,0, 769,201,0,1);
  background-image:
    linear-gradient(#2e2e2e, #2e2e2e), linear-gradient(#2e2e2e, #2e2e2e),
    repeating-linear-gradient(to right, #505050 0 2px, transparent 2px 100px),
    repeating-linear-gradient(to bottom, #505050 0 2px, transparent 2px 100px),
    repeating-linear-gradient(to right, #666 0 1px, transparent 1px 20px),
    repeating-linear-gradient(to bottom, #666 0 1px, transparent 1px 20px);
  background-size: 3px 100%, 100% 3px, auto, auto, auto, auto;
  background-position: center, center, 0 0, 0 0, 0 0, 0 0;
  background-repeat: no-repeat, no-repeat, repeat, repeat, repeat, repeat;
}
.gizmo { position: absolute; right: 16px; top: 35px; width: 40px; height: 44px; }
.stats { position: relative; padding: 1px 0 0 4px; line-height: 15px; text-shadow: 0 0 .7px #3e3e3e; }
.stats p { margin: 0; }
.fps { display: flex; gap: 14px; padding-left: 19px; margin-bottom: 35px !important; }
.stats dl { margin: 0; padding-left: 17px; display: grid; grid-template-columns: 49px 20px; }
.stats dd, .stats dt { margin: 0; }
.gap { margin-top: 15px !important; }
```
